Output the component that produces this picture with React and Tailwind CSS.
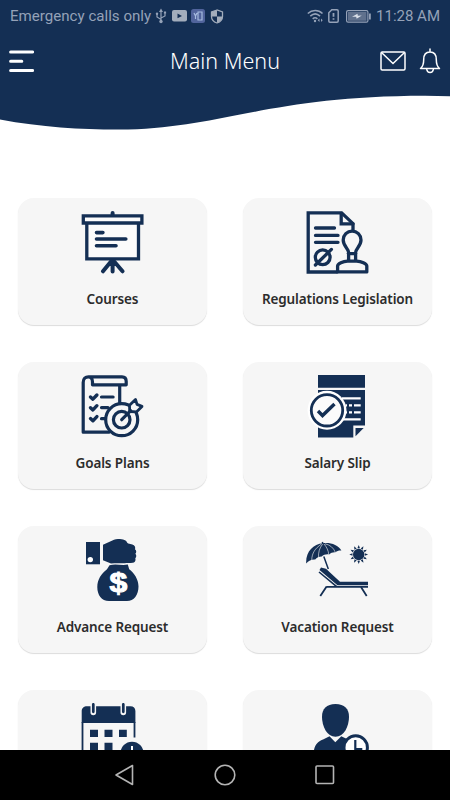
import React from "react";

const NAVY = "#142f54";
const CARD = "#f6f6f6";

function CoursesIcon() {
  return (
    <g fill="none" stroke={NAVY} strokeWidth="3.3" strokeLinecap="round">
      <path d="M31.6 2v2" strokeWidth="4" />
      <path d="M5.8 12v35.8h51.7V12" fill="#fbfbfb" strokeLinecap="butt" />
      <path d="M2.3 4.8h58.6v7.2H2.3z" fill="#fbfbfb" />
      <path d="M15.5 21.6h6.4M15.5 28h29.3M15.5 34.8h19.5" strokeWidth="3.6" />
      <path d="M31.6 50v10.4M30 50.5l-8 9.8M33.200 50.500l8.300 9.800" strokeWidth="4" />
    </g>
  );
}

function RegulationsIcon() {
  return (
    <g fill="none" stroke={NAVY} strokeWidth="3.300" strokeLinecap="round">
      <path d="M47 19v-6.400L35.600 1.900H2.200V61H31" />
      <path d="M35.200 2.500v10.300H47" />
      <path d="M9.500 17h19M9.500 24.400h22.500M9.500 31.300h22.500" />
      <circle cx="16.700" cy="46.300" r="7.400" />
      <path d="M9.400 54 25.400 38.400" />
      <path
        d="M42.600 50v-8.500c0-4-5.400-6.300-5.400-12.500a8.900 8.900 0 0 1 17.800 0c0 6.200-5.400 8.500-5.400 12.500V50"
        fill={CARD}
      />
      <path d="M42.400 42.600h7.200" />
      <path d="M31.600 60.900v-5.900c0-2.500 5.500-4.700 10-4.900h9c4.500.2 10.200 2.400 10.200 4.900v5.900z" fill={CARD} strokeLinejoin="round" />
    </g>
  );
}

function GoalsIcon() {
  return (
    <g fill="none" stroke={NAVY} strokeWidth="3.200" strokeLinecap="round" strokeLinejoin="round">
      <path d="M28 57.200H2.200V7.500C2.200 3.500 4.500 1.800 7.500 1.800H41c3 0 4.200 2 4.200 4.600v3.400H11.500V7c0-3-1.500-5.200-4-5.200" />
      <path d="M38.700 10.500V28" />
      <path d="m9.500 22 2.400 2.200 4-4.200M9.500 32.700l2.400 2.200 4-4.200M9.500 43.600l2.400 2.200 4-4.200" strokeWidth="3.400" />
      <path d="M20.500 22h11.600M20.500 32.600H27M20.500 43.700H24" />
      <circle cx="40.700" cy="44.700" r="16" fill={CARD} />
      <circle cx="40.700" cy="44.700" r="8.300" />
      <path d="m48.700 36.500-.2-6.200 6-5.900 1.500 5 5 2-5.600 5.500z" fill={CARD} strokeWidth="2.800" />
      <path d="m40.700 44.700 9-9" />
    </g>
  );
}

function SalaryIcon() {
  return (
    <g>
      <path d="M12 0h47v12.800H12zM12 15h47v35.500H47.300v12H12z" fill={NAVY} />
      <path d="M49.500 53h8.200l-8.200 8.300z" fill={NAVY} />
      <path
        d="M36 23.400h18.700M39.500 30.400h1.500M43 30.400h3M48 30.400h6.700M39.500 37.300h1.500M43 37.300h3M48 37.300h6.700M36 44.300h18.700"
        fill="none"
        stroke="#fff"
        strokeWidth="2.300"
      />
      <circle cx="21" cy="35.300" r="19.500" fill="#fff" />
      <circle cx="21" cy="35.300" r="15.700" fill="#fbfbfb" stroke={NAVY} strokeWidth="2.800" />
      <path d="m12 36 4.500 4.500L28.500 29" fill="none" stroke={NAVY} strokeWidth="3.400" />
    </g>
  );
}

function AdvanceIcon() {
  return (
    <g fill={NAVY}>
      <path d="M5 3h14v22.300H5z" />
      <circle cx="9.300" cy="20.600" r="2.700" fill="#fff" />
      <path d="M22 5.700 33 .8c4-1.500 9-.8 11.500.7 1.500.8 1.500 2.700 2.700 3 3 .5 5.800 1 6.700 3 .5 1.500.3 2.300 0 2.800 1.800 1.200 1.600 3.500.4 4.400 1.400 1.200 1.200 3.500 0 4.500.7 2-.3 4.300-2.600 4.600-6 .8-15 0-21.700.6L22 21.300z" />
      <path d="M28.500 26.300c6-1.700 11.500.3 18.300-.7l1.400 4.700c5 3.700 9.300 10.200 9.300 17.200 0 8.500-4.500 14.500-11.500 14.500H28c-7.500 0-11.700-6-11.700-14 0-7.500 4.200-13.500 9.700-17.700z" />
      <text
        x="32.200"
        y="53"
        textAnchor="middle"
        transform="scale(1.160 1)"
        fontFamily="Liberation Sans, sans-serif"
        fontSize="27.500"
        fontWeight="700"
        fill="#fff"
        stroke="#fff"
        strokeWidth="1"
      >
        $
      </text>
    </g>
  );
}

// 12 pointed rays around the sun disc
const sunRays = Array.from({ length: 12 }, (_, i) => i * 30);

function VacationIcon() {
  return (
    <g fill="none" stroke={NAVY}>
      <path
        d="M.2 24.500C-.5 13 7 5 17 4.200 25 3.300 32 6 35.400 11.500c-2.300-.2-4.300.3-6 1.700-2.400-.2-4.600.4-6.200 2.200-3-.5-5.600.2-7.500 2.200-2.700 0-5 1-6.500 3-3.500-.2-6.700 1-9 3.900z"
        fill={NAVY}
        stroke="none"
      />
      <path d="M15.500 5C9 9.500 6 14 5.700 21M16.700 5c-3.200 4-4.500 8-4.200 14M18 5c2.700 3 4.300 6.500 4.800 10.500M19 4.800c5 1 8.500 4 10.300 8.400" stroke={CARD} strokeWidth=".6" />
      <path d="M16.300 3 17 5M17.800 17.500 22.300 30" strokeWidth="1.500" />
      <circle cx="52.700" cy="15.500" r="5.700" fill={NAVY} stroke="none" />
      {sunRays.map((angle) => (
        <path key={angle} d="M51.400 9.300h2.600l-1.300-3.200z" transform={`rotate(${angle} 52.700 15.500)`} fill={NAVY} stroke="none" />
      ))}
      <path d="m15 28.500 5 1.300L34 42.800h28v3.500H31.500L13.500 31z" fill={NAVY} stroke="none" />
      <path d="M13 33 31 47.900h31M20.300 47.900h12" strokeWidth="1.600" />
      <path d="m20.600 47.500-6.300 9.400M55 48l5.700 8.900" strokeWidth="1.800" />
    </g>
  );
}

function CalendarIcon() {
  return (
    <g fill={NAVY}>
      <path d="M1.500 19v43M53.500 19v15.500" fill="none" stroke={NAVY} strokeWidth="1.800" />
      <path d="M6 3.300h43.500c3 0 4.900 2 4.900 4.800v12H.7v-12c0-2.800 2.300-4.800 5.300-4.800z" />
      <path d="M12.300 1v8.500M42.300 1v8.500" fill="none" stroke={CARD} strokeWidth="5.600" strokeLinecap="round" />
      <path d="M12.300 1.300v7.500M42.300 1.300v7.500" fill="none" stroke={NAVY} strokeWidth="2.700" strokeLinecap="round" />
      <path d="M9 26.700h8V34H9zM23.500 26.700h8V34h-8zM38 26.700h7.800V34H38zM9 39.700h8V47H9zM23.500 39.700h8V47h-8z" />
      <circle cx="51" cy="50.300" r="11.600" />
      <path d="M51 43v8" stroke="#fff" strokeWidth="2" />
    </g>
  );
}

function EmployeeIcon() {
  return (
    <g fill={NAVY}>
      <path d="M29.500 1c9 0 13.500 5 13.500 12.500 0 10-5 20.300-13.500 20.300S16 23.500 16 13.500C16 6 20.500 1 29.500 1z" />
      <path d="m23.500 33.300 5.800 6 6-6c5 3 13 3 15 13.700v15H7c0-17 1.500-22 10-25.500z" />
      <circle cx="49.700" cy="44.500" r="11.700" fill="#fff" stroke={NAVY} strokeWidth="3" />
      <path d="M49.300 37v9h7" fill="none" stroke={NAVY} strokeWidth="2.200" />
    </g>
  );
}

const menuItems = [
  { label: "Courses", icon: CoursesIcon },
  { label: "Regulations Legislation", icon: RegulationsIcon },
  { label: "Goals Plans", icon: GoalsIcon },
  { label: "Salary Slip", icon: SalaryIcon },
  { label: "Advance Request", icon: AdvanceIcon },
  { label: "Vacation Request", icon: VacationIcon },
  { label: "", icon: CalendarIcon },
  { label: "", icon: EmployeeIcon },
];

function StatusBar() {
  return (
    <div className="flex h-8 items-center px-[10px] font-['Roboto',sans-serif] text-[#95a2b8]">
      <span className="w-[142px] whitespace-nowrap pt-px text-[15.1px] leading-none">Emergency calls only</span>
      <svg className="ml-[3px]" width="12" height="16" viewBox="0 0 12 16" fill="none" stroke="currentColor" strokeWidth="1.200">
        <path d="M6 3v10M2 6v3l4 2.500M10 5.500V8L6 10" />
        <path d="m4 4 2-3.500L8 4z" fill="currentColor" stroke="none" />
        <circle cx="6" cy="13.500" r="1.700" fill="currentColor" stroke="none" />
        <circle cx="2" cy="5.700" r="1.200" fill="currentColor" stroke="none" />
        <path d="M8.900 3.500h2.200v2.200H8.900z" fill="currentColor" stroke="none" />
      </svg>
      <svg className="ml-[5px]" width="15" height="12" viewBox="0 0 15 12">
        <rect width="15" height="11.500" rx="2" fill="#a3adbc" />
        <path d="m5.500 3.500 4.500 2.400-4.500 2.400z" fill={NAVY} />
      </svg>
      <svg className="ml-[4px]" width="14" height="14" viewBox="0 0 14 14">
        <rect width="14" height="14" rx="2.500" fill="#51649c" />
        <path d="M7 3h4v8H7zM3 4l1.500 3L6 4M4.500 7v3" fill="none" stroke="#a7bce0" strokeWidth="1.200" />
      </svg>
      <svg className="ml-[5px]" width="14" height="15" viewBox="0 0 14 15">
        <path d="M7 1 1.500 3v4.500c0 3 2.500 5.500 5.500 6.500 3-1 5.500-3.500 5.500-6.500V3z" fill={NAVY} stroke="#a3adbc" strokeWidth="1.300" />
        <path d="M7 1v6.500H1.500V3zM7 7.500h5.500c0 3-2.500 5.500-5.500 6.500z" fill="#a3adbc" />
      </svg>
      <div className="ml-auto flex items-center">
        <svg width="17" height="14" viewBox="0 0 17 14" fill="none" stroke="currentColor" strokeWidth="1.600">
          <path d="M.8 4.500c4.300-4 10.500-4 14.700 0M3.300 7.200c3-2.800 6.700-2.800 9.700 0M5.700 9.800c1.500-1.300 3.300-1.300 4.700 0" />
          <circle cx="8" cy="12" r="1.200" fill="currentColor" stroke="none" />
          <path d="m12.500 9.500-1.800 1.800 1.800 1.800zM14 9.500l1.700 1.800-1.700 1.800z" fill="currentColor" stroke="none" />
        </svg>
        <svg className="ml-[4px]" width="11" height="14" viewBox="0 0 11 14" fill="none" stroke="currentColor" strokeWidth="1.500">
          <path d="M3.800.8H9c.8 0 1.200.4 1.200 1.200v10c0 .8-.4 1.200-1.200 1.200H2c-.8 0-1.200-.4-1.200-1.200V3.800z" />
          <path d="M5.500 4v3.800M5.500 9.200v1.600" strokeWidth="1.800" />
        </svg>
        <svg className="ml-[7px]" width="25" height="13" viewBox="0 0 25 13">
          <rect x=".6" y=".6" width="21.300" height="11.600" rx="1.500" fill="none" stroke="currentColor" strokeWidth="1.200" />
          <rect x="2" y="2" width="18.500" height="8.800" fill="#60718d" />
          <path d="m6 6.800 5.500-3 .3 2 4-.3-5.200 3.300-.4-2z" fill="#dbe1ea" />
          <path d="M23.900 3.500v6" stroke="currentColor" strokeWidth="1.800" />
        </svg>
        <span className="ml-[5px] whitespace-nowrap pt-px text-[15px] leading-none">11:28 AM</span>
      </div>
    </div>
  );
}

function Header() {
  return (
    <header className="grid h-[132px] shrink-0">
      <svg className="col-start-1 row-start-1" width="450" height="132" viewBox="0 0 450 132">
        <path d="M0 0h450v96.200L425 95.800C270 96 225 127 128 129.500 90 130 45 128 0 119.500z" fill={NAVY} />
      </svg>
      <div className="col-start-1 row-start-1">
        <StatusBar />
        <div className="grid h-[58px] grid-cols-[1fr_auto_1fr] items-center px-[9px] text-white">
          <svg width="25" height="23" viewBox="0 0 25 23" fill="none" stroke="currentColor" strokeWidth="3" strokeLinecap="round">
            <path d="M1.600 2h22M1.600 11.300h11.200M1.600 20.500h22" />
          </svg>
          <h1 className="font-['Noto_Sans',sans-serif] text-[21.5px] font-light leading-none">Main Menu</h1>
          <div className="flex items-center justify-end gap-[13px]">
            <svg width="26" height="20" viewBox="0 0 26 20" fill="none" stroke="currentColor" strokeWidth="1.500">
              <rect x="1" y="1" width="24" height="18" rx="1.200" />
              <path d="m1.500 1.500 11.500 11 11.500-11" />
            </svg>
            <svg width="22" height="26" viewBox="0 0 22 26" fill="none" stroke="currentColor" strokeWidth="1.500" strokeLinecap="round" strokeLinejoin="round">
              <path d="M11 1v3M1.500 20.500c2.500-2 3.200-4.500 3.200-9C4.700 7 7 4 11 4s6.300 3 6.300 7.500c0 4.500.7 7 3.200 9z" />
              <path d="M7.800 21.500c.5 4 6 4 6.500 0" />
            </svg>
          </div>
        </div>
      </div>
    </header>
  );
}

function MenuCard({ item }) {
  const Icon = item.icon;
  return (
    <div className="flex h-[127px] flex-col items-center rounded-[16px] bg-[#f6f6f6] pt-[13px] shadow-[0_1px_1px_rgba(0,0,0,0.14)]">
      <svg width="63" height="63" viewBox="0 0 63 63" className="shrink-0">
        <Icon />
      </svg>
      <span className="mt-[15px] whitespace-nowrap font-['Noto_Sans',sans-serif] text-[13.5px] font-semibold leading-[20px] tracking-[-0.12px] text-[#2c2c2c]">
        {item.label}
      </span>
    </div>
  );
}

function NavBar() {
  return (
    <nav className="flex h-[50px] shrink-0 items-center justify-center gap-[79px] bg-black pr-[2px] text-[#b4b4b4]">
      <svg width="21" height="22" viewBox="0 0 21 22" fill="none" stroke="currentColor" strokeWidth="1.600" strokeLinejoin="round">
        <path d="M18.500 1.500v19L2 11z" />
      </svg>
      <svg width="22" height="22" viewBox="0 0 22 22" fill="none" stroke="currentColor" strokeWidth="1.600">
        <circle cx="11" cy="11" r="9.800" />
      </svg>
      <svg width="20" height="20" viewBox="0 0 20 20" fill="none" stroke="currentColor" strokeWidth="1.600">
        <rect x="1" y="1" width="17.500" height="17.500" rx="1" />
      </svg>
    </nav>
  );
}

export default function App() {
  return (
    <div className="flex h-[800px] w-[450px] flex-col overflow-hidden bg-white">
      <Header />
      <main className="min-h-0 flex-1 overflow-hidden px-[18px] pt-[66px]">
        <div className="grid grid-cols-[189px_189px] justify-between gap-y-[37px]">
          {menuItems.map((item, index) => (
            <MenuCard key={index} item={item} />
          ))}
        </div>
      </main>
      <NavBar />
    </div>
  );
}
